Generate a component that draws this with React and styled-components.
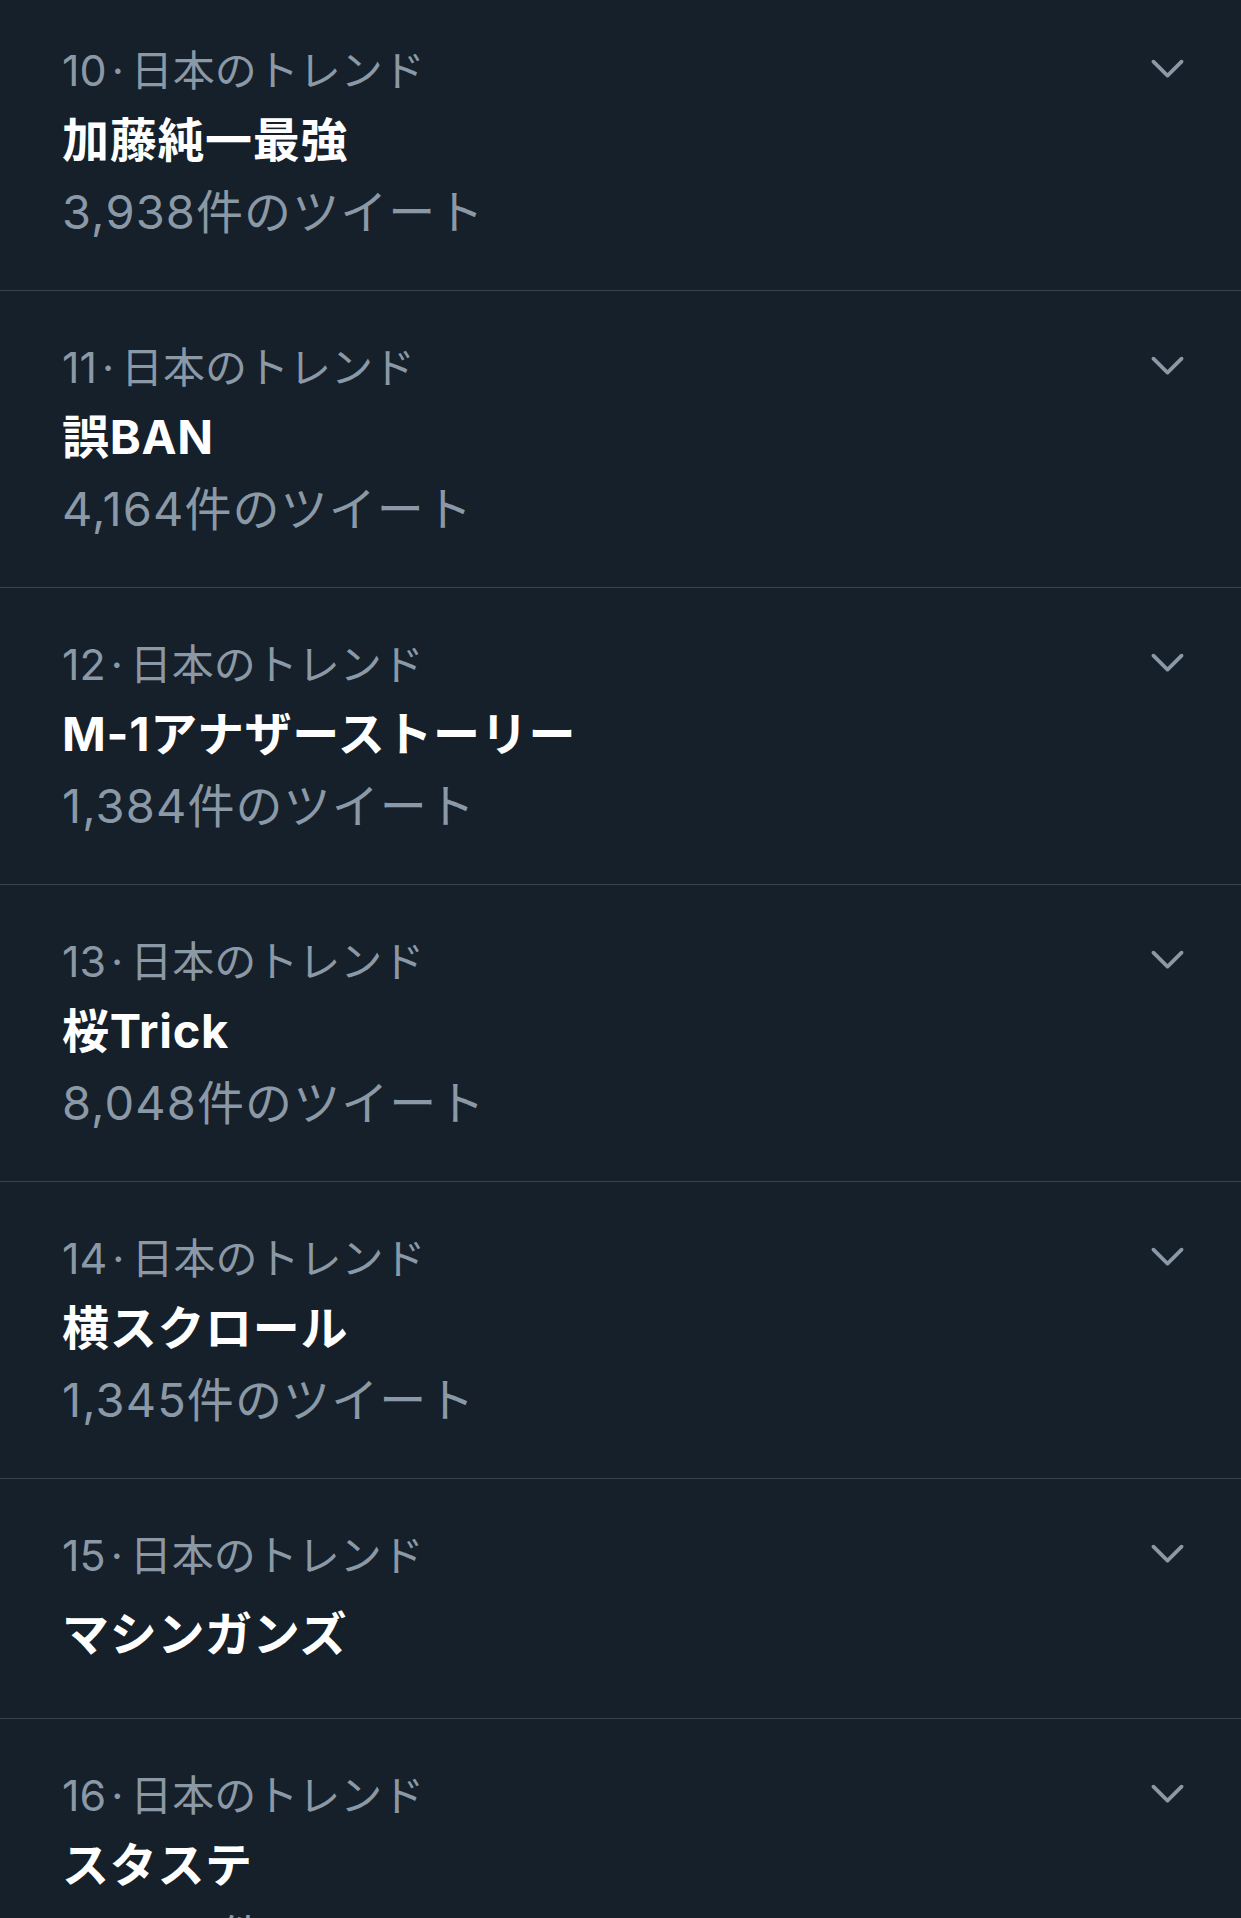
import React from "react";
import styled, { createGlobalStyle } from "styled-components";

const Global = createGlobalStyle`
  html, body {
    margin: 0;
    padding: 0;
    background: #15202b;
  }
  body {
    font-family: "Inter", "Noto Sans CJK JP", sans-serif;
    -webkit-font-smoothing: antialiased;
  }
`;

const Page = styled.div`
  width: 1241px;
  height: 1918px;
  overflow: hidden;
  background: #15202b;
`;

const List = styled.ul`
  list-style: none;
  margin: -6px 0 0 0;
  padding: 0;
`;

const Row = styled.li`
  display: grid;
  grid-template-columns: 1fr auto;
  padding: 43px 51px ${(p) => (p.$compact ? "39px" : "42px")} 62px;
  border-bottom: 1px solid #38444d;
  box-sizing: border-box;
`;

const Content = styled.div`
  display: flex;
  flex-direction: column;
  min-width: 0;
`;

const Label = styled.div`
  font-size: 42px;
  line-height: 66px;
  color: #8b98a5;
  white-space: nowrap;
`;

const Rank = styled.span`
  font-size: 43px;
`;

const Dot = styled.span`
  margin: 0 7px 0 5px;
`;

const Title = styled.div`
  font-size: 47px;
  font-weight: 700;
  letter-spacing: 0.7px;
  line-height: ${(p) => (p.$compact ? "90px" : "72px")};
  color: #ffffff;
  white-space: nowrap;
`;

const Count = styled.div`
  font-size: 47px;
  letter-spacing: 1.1px;
  line-height: 72px;
  color: #8b98a5;
  white-space: nowrap;
`;

const ChevronBox = styled.div`
  height: 66px;
  display: flex;
  align-items: center;
  color: #8b98a5;
  margin-top: -3px;
`;

const Chevron = () => (
  <svg width="45" height="45" viewBox="0 0 24 24" fill="currentColor">
    <path d="M20.207 8.147c-.39-.39-1.023-.39-1.414 0L12 14.94 5.207 8.147c-.39-.39-1.023-.39-1.414 0-.39.39-.39 1.023 0 1.414l7.5 7.5c.195.196.45.294.707.294s.512-.098.707-.293l7.5-7.5c.39-.39.39-1.022 0-1.413z" />
  </svg>
);

const trends = [
  { rank: 10, title: "加藤純一最強", count: "3,938" },
  { rank: 11, title: "誤BAN", count: "4,164" },
  { rank: 12, title: "M-1アナザーストーリー", count: "1,384" },
  { rank: 13, title: "桜Trick", count: "8,048" },
  { rank: 14, title: "横スクロール", count: "1,345" },
  { rank: 15, title: "マシンガンズ", count: null },
  { rank: 16, title: "スタステ", count: "10,428" },
];

export default function App() {
  return (
    <Page>
      <Global />
      <List>
        {trends.map((t) => (
          <Row key={t.rank} $compact={!t.count}>
            <Content>
              <Label>
                <Rank>{t.rank}</Rank>
                <Dot>·</Dot>日本のトレンド
              </Label>
              <Title $compact={!t.count}>{t.title}</Title>
              {t.count && <Count>{t.count}件のツイート</Count>}
            </Content>
            <ChevronBox>
              <Chevron />
            </ChevronBox>
          </Row>
        ))}
      </List>
    </Page>
  );
}
